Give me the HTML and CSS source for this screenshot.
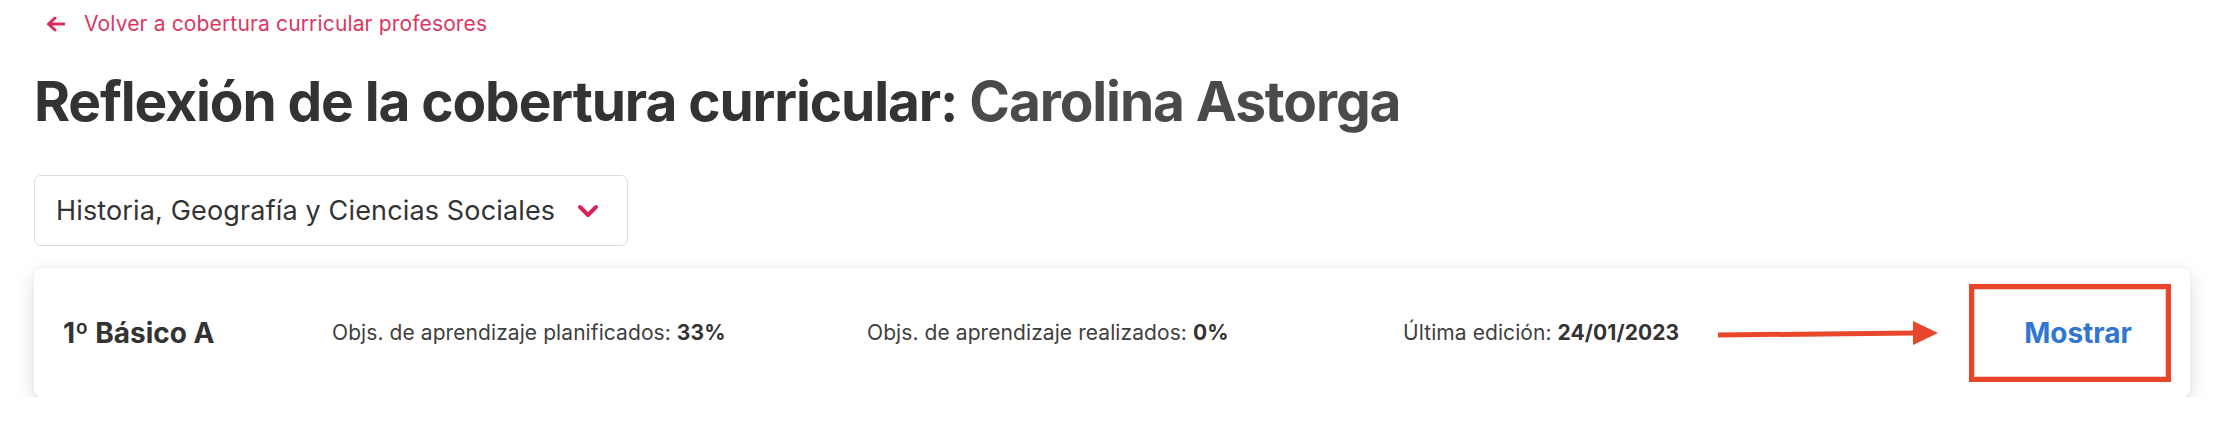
FILE: index.html
```html
<!DOCTYPE html>
<html lang="es">
<head>
    <meta charset="UTF-8">
    <meta name="viewport" content="width=device-width, initial-scale=1.0">
    <title>Reflexión de la cobertura curricular</title>
    <link rel="stylesheet" href="styles.css">
</head>
<body>
    <div class="page">
        <a class="back-link" href="#">
            <svg class="back-icon" width="19" height="16" viewBox="0 0 19 16" aria-hidden="true">
                <path d="M9 2 L2.5 8 L9 14 M2.5 8 H18" fill="none" stroke="currentColor" stroke-width="3" stroke-linecap="round" stroke-linejoin="round"/>
            </svg>
            <span>Volver a cobertura curricular profesores</span>
        </a>

        <h1 class="title">Reflexión de la cobertura curricular: <span class="teacher">Carolina Astorga</span></h1>

        <button class="subject-select" type="button">
            <span>Historia, Geografía y Ciencias Sociales</span>
            <svg class="chevron" width="22" height="14" viewBox="0 0 22 14" aria-hidden="true">
                <path d="M3 3 L11 11 L19 3" fill="none" stroke="currentColor" stroke-width="4" stroke-linecap="round" stroke-linejoin="round"/>
            </svg>
        </button>

        <div class="course-card">
            <div class="course-name">1º Básico A</div>
            <div class="course-stat stat-planned">Objs. de aprendizaje planificados: <b>33%</b></div>
            <div class="course-stat stat-done">Objs. de aprendizaje realizados: <b>0%</b></div>
            <div class="course-stat">Última edición: <b>24/01/2023</b></div>

            <!-- flecha de anotación -->
            <svg class="hint-arrow" width="222" height="26" viewBox="0 0 222 26" aria-hidden="true">
                <path d="M1 15 L197 13" stroke="#e8472b" stroke-width="5"/>
                <polygon points="196,1 221,13 196,25" fill="#e8472b"/>
            </svg>
            <button class="show-btn" type="button">Mostrar</button>
        </div>
    </div>
</body>
</html>
```

FILE: styles.css
```css
body {
    margin: 0;
    background: #fff;
    font-family: Inter, 'Noto Sans', sans-serif;
    color: #333;
}

.page {
    padding: 12px 28px 0 34px;
}

.back-link {
    display: inline-flex;
    align-items: center;
    gap: 19px;
    margin-left: 12px;
    color: #dc3762;
    text-decoration: none;
    font-size: 21px;
    line-height: 24px;
    letter-spacing: 0.15px;
}

.back-icon {
    color: #d92b5c;
}

.title {
    margin: 32px 0 0;
    font-size: 55px;
    line-height: 66px;
    font-weight: 700;
    letter-spacing: -1.1px;
    color: #333;
}

.teacher {
    color: #4a4a4a;
}

.subject-select {
    display: inline-flex;
    align-items: center;
    gap: 22px;
    height: 71px;
    margin-top: 41px;
    padding: 0 28px 0 21px;
    background: #fff;
    border: 1px solid #dcdcdc;
    border-radius: 7px;
    font-family: inherit;
    font-size: 27px;
    letter-spacing: 0.15px;
    color: #333;
    cursor: pointer;
}

.chevron {
    color: #d6245a;
}

.course-card {
    display: flex;
    align-items: center;
    height: 129px;
    margin-top: 22px;
    padding: 0 19px 0 29px;
    background: #fff;
    border-radius: 8px;
    box-shadow: 0 6px 20px rgba(0, 0, 0, 0.14), 0 0 3px rgba(0, 0, 0, 0.05);
}

.course-name {
    flex: 0 0 269px;
    font-size: 28px;
    font-weight: 700;
    color: #333;
}

.course-stat {
    font-size: 21px;
    letter-spacing: 0.08px;
    color: #3f3f3f;
}

.course-stat b {
    color: #333;
}

.stat-planned {
    flex: 0 0 535px;
}

.stat-done {
    flex: 0 0 536px;
}

.hint-arrow {
    margin-left: auto;
    margin-right: 30px;
}

.show-btn {
    height: 98px;
    padding: 0 34px 0 50px;
    background: #fff;
    border: 5px solid #e8452b;
    box-shadow: inset 0 0 0 1px #f7cfc6;
    font-family: inherit;
    font-size: 28px;
    font-weight: 700;
    color: #3176d2;
    cursor: pointer;
}
```
